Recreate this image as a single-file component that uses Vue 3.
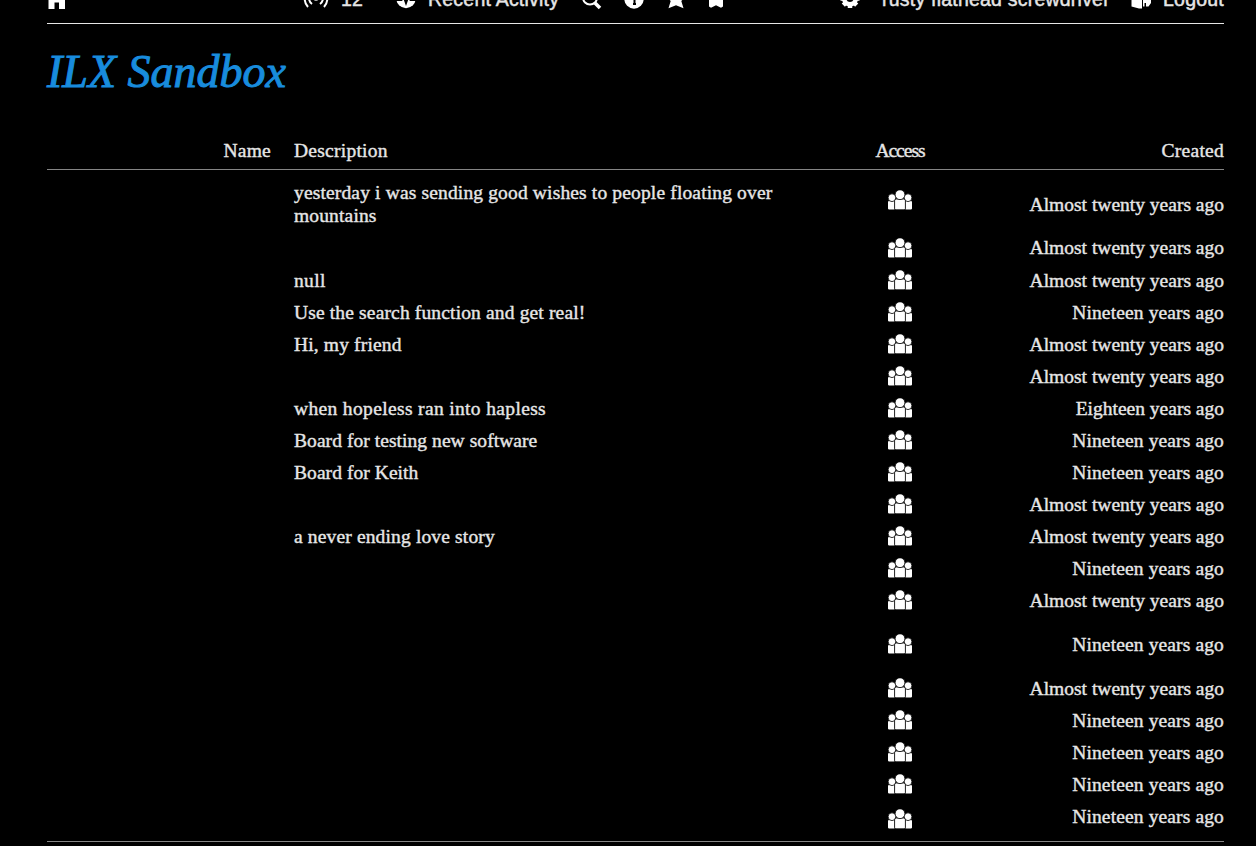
<script setup>
const almost = "Almost twenty years ago";
const nineteen = "Nineteen years ago";

const boards = [
  { description: "yesterday i was sending good wishes to people floating over mountains", created: almost, size: "double" },
  { description: "", created: almost, size: "second" },
  { description: "null", created: almost, spacing: "loose" },
  { description: "Use the search function and get real!", created: nineteen },
  { description: "Hi, my friend", created: almost },
  { description: "", created: almost },
  { description: "when hopeless ran into hapless", created: "Eighteen years ago", spacing: "loose" },
  { description: "Board for testing new software", created: nineteen, spacing: "tight" },
  { description: "Board for Keith", created: nineteen, spacing: "tight" },
  { description: "", created: almost },
  { description: "a never ending love story", created: almost },
  { description: "", created: nineteen },
  { description: "", created: almost },
  { description: "", created: nineteen, size: "tall" },
  { description: "", created: almost },
  { description: "", created: nineteen },
  { description: "", created: nineteen },
  { description: "", created: nineteen },
  { description: "", created: nineteen, size: "last" },
];
</script>

<template>
  <div class="page">
    <nav class="nav">
      <a class="nav-item home">
        <svg viewBox="0 0 24 24"><path d="M12 3 1 13h2.500v10h6v-6.500h4.500V23H20V13h3z" /></svg>
      </a>
      <a class="nav-item live">
        <svg class="line" viewBox="0 0 26 24">
          <circle class="dot" cx="13" cy="12" r="2.800" />
          <path d="M9 18a7.500 7.500 0 0 1 0-12M17 18a7.500 7.500 0 0 0 0-12M5 21a12.500 12.500 0 0 1 0-17M21 21a12.500 12.500 0 0 0 0-17" />
        </svg>
        <span>12</span>
      </a>
      <a class="nav-item activity">
        <svg viewBox="0 0 24 24">
          <circle cx="12" cy="12.500" r="9.700" />
          <path class="cut" d="M2 14h5.500l2-4 2.500 7 2.500-7 2 4H22" />
        </svg>
        <span>Recent Activity</span>
      </a>
      <a class="nav-item search">
        <svg class="line" viewBox="0 0 24 24">
          <circle class="lens" cx="9" cy="11.500" r="7" />
          <path class="handle" d="m14 17 5 5" />
        </svg>
      </a>
      <a class="nav-item info">
        <svg viewBox="0 0 24 24">
          <circle cx="12" cy="13" r="9.700" />
          <path class="cut" d="M10 12h2.500v6M11 18h3M12 7v2" />
        </svg>
      </a>
      <a class="nav-item star">
        <svg viewBox="0 0 24 24"><path d="m12 3 2.900 6.500 7 .700-4.600 4.800 2.200 7.300L12 19.200l-7.500 3.100 2.200-7.300-4.600-4.800 7-.700z" /></svg>
      </a>
      <a class="nav-item bookmark">
        <svg viewBox="0 0 24 24"><path d="M5 3h14v17.500l-2 1.300-5-2.500-5 2.500-2-1.300z" /></svg>
      </a>
      <a class="nav-item user">
        <svg class="line gear" viewBox="0 0 24 24">
          <circle cx="12" cy="12.500" r="5.800" />
          <path d="M12 3v3M12 19v3M2.500 12.500h3M18.500 12.500h3M5.300 5.800l2.200 2.200M16.500 17l2.200 2.200M18.700 5.800 16.500 8M7.500 17l-2.200 2.200" />
        </svg>
        <span>rusty flathead screwdriver</span>
      </a>
      <a class="nav-item logout">
        <svg viewBox="0 0 24 24"><path d="M2.500 4.500 13 3v19.500h-3L2.500 20.500zM14 5h8v12l-2.500 3.500H17V17h-1.500v3.500H14z" /></svg>
        <span>Logout</span>
      </a>
    </nav>

    <h1 class="title">ILX Sandbox</h1>

    <div class="boards">
      <div class="row head">
        <span class="name">Name</span>
        <span>Description</span>
        <span class="access">Access</span>
        <span class="created">Created</span>
      </div>
      <div class="body">
        <div v-for="(board, i) in boards" :key="i" class="row" :class="board.size">
          <span class="name"></span>
          <span class="description" :class="board.spacing">{{ board.description }}</span>
          <span class="access">
            <svg class="people" viewBox="0 0 24 20">
              <path d="M1 11h5.500v8.500H1.200Q0 19.500 0 18.500v-6.200Q0 11 1 11zM17.500 11H23q1 0 1 1.300v6.200q0 1-1.200 1h-5.300z" />
              <circle class="front" cx="4" cy="7.700" r="3.900" />
              <circle class="front" cx="20" cy="7.700" r="3.900" />
              <path class="front" d="M8.200 9h7.600q1.600 0 1.600 1.700v7.800q0 1.300-1.300 1.300H7.900q-1.300 0-1.300-1.300v-7.800Q6.600 9 8.200 9z" />
              <circle class="front" cx="12" cy="4.700" r="4.900" />
            </svg>
          </span>
          <span class="created" :class="{ wide: board.created === nineteen }">{{ board.created }}</span>
        </div>
      </div>
    </div>
  </div>
</template>

<style>
body {
  margin: 0;
  background: #000;
  overflow: hidden;
}
</style>

<style scoped>
.page {
  display: flex;
  flex-direction: column;
  box-sizing: border-box;
  height: 846px;
  padding: 0 32px 0 47px;
  background: #000;
  color: #e6e6e6;
  font-family: "Liberation Serif", serif;
  font-size: 19.5px;
  line-height: 23px;
}

.nav {
  display: flex;
  flex-shrink: 0;
  align-items: center;
  height: 24px;
  margin-top: -14px;
  padding-bottom: 13px;
  border-bottom: 1px solid #e6e6e6;
  font-family: "Liberation Sans", sans-serif;
  font-size: 19.5px;
  line-height: 24px;
  letter-spacing: 0.22px;
  white-space: nowrap;
  -webkit-text-stroke: 0.45px;
}

.nav-item {
  display: flex;
  align-items: center;
}

.nav-item span {
  padding-top: 2px;
}

.nav-item svg {
  width: 24px;
  height: 24px;
  flex-shrink: 0;
  fill: #fff;
}

.nav-item .line {
  fill: none;
  stroke: #fff;
  stroke-width: 2;
}

.nav-item .dot {
  fill: #fff;
  stroke: none;
}

.nav-item .cut {
  fill: none;
  stroke: #000;
  stroke-width: 2;
}

.nav-item .handle {
  stroke-width: 3.5;
}

.nav-item .gear {
  stroke-width: 4.5;
}

.home {
  width: 256px;
  margin-left: -2px;
}

.live {
  width: 91px;
  gap: 12px;
  margin-left: 2px;
}

.nav-item.live svg {
  width: 26px;
}

.activity {
  width: 187px;
  gap: 10px;
}

.search {
  width: 41px;
}

.info {
  width: 42px;
}

.star {
  width: 40px;
}

.bookmark {
  width: 134px;
}

.user {
  width: 291px;
  gap: 20px;
}

.logout {
  gap: 10px;
}

.title {
  margin: 22px 0 0;
  height: 86px;
  color: #188cdd;
  font-size: 46px;
  font-style: italic;
  font-weight: 400;
  line-height: 52px;
  -webkit-text-stroke: 1px;
}

.row {
  display: grid;
  grid-template-columns: 224px 500px 1fr 218px;
  column-gap: 23px;
  align-items: center;
  height: 32px;
  -webkit-text-stroke: 0.4px;
}

.head {
  height: 37px;
  border-bottom: 1px solid #858585;
  letter-spacing: 0.25px;
}

.head .access {
  letter-spacing: -1px;
}

.body {
  padding: 7px 0 8px;
  border-bottom: 1px solid #858585;
}

.name,
.created {
  text-align: right;
}

.body .description,
.body .created {
  padding-bottom: 2px;
}

.body .double .created {
  padding-bottom: 0;
}

.description {
  letter-spacing: 0.15px;
}

.loose {
  letter-spacing: 0.35px;
}

.tight {
  letter-spacing: 0.06px;
}

.wide {
  letter-spacing: 0.13px;
}

.access {
  display: flex;
  justify-content: center;
}

.double {
  height: 55px;
}

.second {
  height: 33px;
}

.tall {
  height: 56px;
}

.people {
  width: 24px;
  height: 20px;
  margin-bottom: 2px;
  fill: #fff;
}

.front {
  stroke: #000;
  stroke-width: 0.8;
}

.double .people {
  margin-bottom: 9px;
}

.second .people {
  margin-bottom: 1px;
}

.last .people {
  margin: 4px 0 0;
}
</style>
